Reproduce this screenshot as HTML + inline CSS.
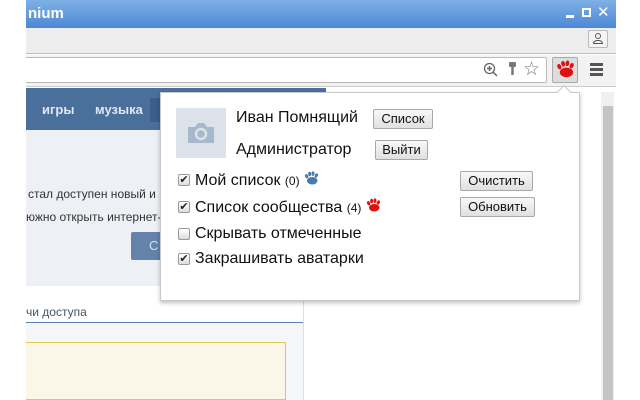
<!DOCTYPE html>
<html><head><meta charset="utf-8"><style>
*{margin:0;padding:0;box-sizing:border-box}
body{width:640px;height:400px;overflow:hidden;background:#fff;font-family:"Liberation Sans","DejaVu Sans",sans-serif;position:relative}
.a{position:absolute}
.btn{position:absolute;border:1px solid #a8a8a8;border-radius:2px;background:linear-gradient(#f8f8f8,#e0e0e0);font-size:13px;color:#111;text-align:center;line-height:17px;height:20px}
.cb{position:absolute;width:12px;height:12px;border:1px solid #999;border-radius:2px;background:linear-gradient(#fff,#ddd);font-size:11px;line-height:10px;text-align:center;color:#222;font-weight:bold}
.lbl{position:absolute;font-size:16px;color:#111;white-space:nowrap}
.lbl small{font-size:12px}
.paw{display:inline-block;vertical-align:-1px}
</style></head><body>
<div class="a" style="left:26px;top:0;width:590px;height:28px;background:linear-gradient(#7fb0e6,#4d88d3)"></div>
<div class="a" style="left:28px;top:5px;color:#fff;font-weight:bold;font-size:15px">nium</div>
<div class="a" style="left:566px;top:15px;width:8px;height:3px;background:#fff"></div>
<div class="a" style="left:582px;top:8px;width:9px;height:9px;border:2px solid #fff"></div>
<div class="a" style="left:597px;top:3px;color:#fff;font-size:15px;font-weight:bold">✕</div>
<div class="a" style="left:26px;top:28px;width:590px;height:26px;background:#ededed;border-bottom:1px solid #bdbdbd"></div>
<div class="a" style="left:588px;top:30px;width:20px;height:18px;border:1px solid #bbb;border-radius:2px;background:#f4f4f4"></div>
<div class="a" style="left:595px;top:33px;width:6px;height:6px;border:1px solid #555;border-radius:50%"></div>
<div class="a" style="left:593px;top:40px;width:10px;height:4px;border:1px solid #555;border-radius:4px 4px 0 0"></div>
<div class="a" style="left:26px;top:55px;width:590px;height:32px;background:#f2f2f2;border-bottom:1px solid #ccc"></div>
<div class="a" style="left:26px;top:57px;width:521px;height:26px;background:#fff;border:1px solid #bbb;border-left:none;border-radius:0 2px 2px 0"></div>
<svg class="a" style="left:483px;top:62px" width="16" height="16"><circle cx="6.5" cy="6.5" r="5" fill="none" stroke="#666" stroke-width="1.3"/><path d="M4 6.5h5M6.5 4v5M10 10l4 4" stroke="#666" stroke-width="1.5"/></svg>
<svg class="a" style="left:508px;top:61px" width="10" height="16"><rect x="1" y="1" width="7" height="5" rx="1" fill="#777"/><path d="M4.5 6v8" stroke="#777" stroke-width="2.5"/></svg>
<div class="a" style="left:523px;top:58px;font-size:19px;color:#777">&#9734;</div>
<div class="a" style="left:552px;top:57px;width:26px;height:26px;background:#ddd;border:1px solid #aaa;border-radius:2px"></div>
<svg class="a" style="left:556px;top:60px" width="19" height="19" viewBox="0 0 20 20"><g fill="#e01010"><ellipse cx="11" cy="13" rx="7" ry="5"/><ellipse cx="3.5" cy="7" rx="2" ry="3" transform="rotate(-25 3.5 7)"/><ellipse cx="7.5" cy="4" rx="2" ry="3" transform="rotate(-10 7.5 4)"/><ellipse cx="12" cy="3.5" rx="2" ry="3" transform="rotate(10 12 3.5)"/><ellipse cx="16.5" cy="6" rx="2" ry="3" transform="rotate(25 16.5 6)"/></g></svg>
<div class="a" style="left:590px;top:63px;width:13px;height:3px;background:#555;box-shadow:0 5px 0 #555,0 10px 0 #555"></div>
<!-- page -->
<div class="a" style="left:26px;top:88px;width:590px;height:312px;background:#fff"></div>
<div class="a" style="left:26px;top:88px;width:300px;height:42px;background:#4a6f9b"></div>
<div class="a" style="left:42px;top:102px;color:#dfe8f2;font-size:13px;font-weight:bold">игры</div>
<div class="a" style="left:95px;top:102px;color:#dfe8f2;font-size:13px;font-weight:bold">музыка</div>
<div class="a" style="left:150px;top:98px;width:14px;height:24px;background:#3b5f8a"></div>
<div class="a" style="left:26px;top:130px;width:280px;height:156px;background:#edf0f4"></div>
<div class="a" style="left:28px;top:187px;font-size:12px;color:#333">стал доступен новый и</div>
<div class="a" style="left:26px;top:210px;font-size:12px;color:#333">южно открыть интернет-</div>
<div class="a" style="left:131px;top:232px;width:40px;height:28px;background:#6383ab;border-radius:2px;color:#dde;font-size:13px;line-height:28px;padding-left:18px">С</div>
<div class="a" style="left:26px;top:305px;font-size:12px;color:#456">чи доступа</div>
<div class="a" style="left:26px;top:322px;width:277px;height:1px;background:#5b7fb0"></div>
<div class="a" style="left:26px;top:323px;width:277px;height:77px;background:#f5f6f8"></div>
<div class="a" style="left:26px;top:342px;width:260px;height:58px;background:#fbf7e8;border:1px solid #e0c84a;border-left:none"></div>
<div class="a" style="left:303px;top:300px;width:1px;height:100px;background:#dde"></div>
<div class="a" style="left:601px;top:92px;width:13px;height:308px;background:#f0f0f0"></div>
<div class="a" style="left:603px;top:106px;width:10px;height:294px;background:#c4c4c4"></div>
<!-- popup -->
<div class="a" style="left:160px;top:92px;width:420px;height:209px;background:#fff;border:1px solid #c8c8c8;box-shadow:0 2px 4px rgba(0,0,0,.25)"></div>
<div class="a" style="left:559px;top:87px;width:10px;height:10px;background:#fff;border-left:1px solid #c8c8c8;border-top:1px solid #c8c8c8;transform:rotate(45deg)"></div>
<div class="a" style="left:176px;top:108px;width:50px;height:50px;background:#dbe2ea"></div>
<svg class="a" style="left:186px;top:119px" width="30" height="28"><path d="M2 8h7l3-4h6l3 4h7v16H2z" fill="#a6b8cb"/><circle cx="15" cy="15" r="5" fill="none" stroke="#dbe2ea" stroke-width="2.5"/></svg>
<div class="lbl" style="left:236px;top:109px">Иван Помнящий</div>
<div class="btn" style="left:373px;top:109px;width:60px">Список</div>
<div class="lbl" style="left:236px;top:141px">Администратор</div>
<div class="btn" style="left:375px;top:140px;width:53px">Выйти</div>
<div class="cb" style="left:178px;top:174px">✔</div>
<div class="lbl" style="left:195px;top:171px">Мой список <small>(0)</small> <svg class="paw" width="15" height="15" viewBox="0 0 20 20"><g fill="#4a78b0"><ellipse cx="11" cy="13" rx="7" ry="5"/><ellipse cx="3.5" cy="7" rx="2" ry="3" transform="rotate(-25 3.5 7)"/><ellipse cx="7.5" cy="4" rx="2" ry="3"/><ellipse cx="12" cy="3.5" rx="2" ry="3"/><ellipse cx="16.5" cy="6" rx="2" ry="3" transform="rotate(25 16.5 6)"/></g></svg></div>
<div class="btn" style="left:460px;top:171px;width:73px">Очистить</div>
<div class="cb" style="left:178px;top:201px">✔</div>
<div class="lbl" style="left:195px;top:198px">Список сообщества <small>(4)</small> <svg class="paw" width="15" height="15" viewBox="0 0 20 20"><g fill="#e01010"><ellipse cx="11" cy="13" rx="7" ry="5"/><ellipse cx="3.5" cy="7" rx="2" ry="3" transform="rotate(-25 3.5 7)"/><ellipse cx="7.5" cy="4" rx="2" ry="3"/><ellipse cx="12" cy="3.5" rx="2" ry="3"/><ellipse cx="16.5" cy="6" rx="2" ry="3" transform="rotate(25 16.5 6)"/></g></svg></div>
<div class="btn" style="left:460px;top:197px;width:75px">Обновить</div>
<div class="cb" style="left:178px;top:228px"></div>
<div class="lbl" style="left:195px;top:225px">Скрывать отмеченные</div>
<div class="cb" style="left:178px;top:253px">✔</div>
<div class="lbl" style="left:195px;top:250px">Закрашивать аватарки</div>
</body></html>
